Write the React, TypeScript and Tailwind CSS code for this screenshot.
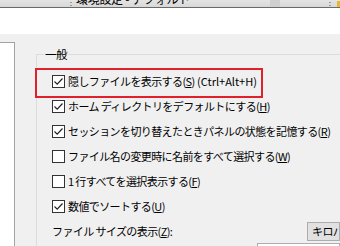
import React from 'react';

type Row = { checked?: boolean; text: string; key: string; tail?: string };

const rows: Row[] = [
  { checked: true, text: '隠しファイルを表示する', key: 'S', tail: ' (Ctrl+Alt+H)' },
  { checked: true, text: 'ホーム ディレクトリをデフォルトにする', key: 'H' },
  { checked: true, text: 'セッションを切り替えたときパネルの状態を記憶する', key: 'R' },
  { checked: false, text: 'ファイル名の変更時に名前をすべて選択する', key: 'W' },
  { checked: false, text: '1 行すべてを選択表示する', key: 'F' },
  { checked: true, text: '数値でソートする', key: 'U' },
];

function CheckBox({ checked }: { checked?: boolean }) {
  return (
    <div className="w-[13px] h-[13px] border border-[#333] bg-white flex items-center justify-center shrink-0">
      {checked && (
        <svg width="11" height="11" viewBox="0 0 11 11">
          <path d="M1.5 5.5 L4.2 8.2 L9.5 2.5" fill="none" stroke="#222" strokeWidth="1.2" />
        </svg>
      )}
    </div>
  );
}

function Label({ text, k, tail }: { text: string; k: string; tail?: string }) {
  return (
    <span className="whitespace-nowrap">
      {text}(<span className="underline underline-offset-1">{k}</span>)
      {tail && <span className="tracking-normal">{tail}</span>}
    </span>
  );
}

export default function App() {
  return (
    <div
      className="w-[340px] h-[246px] overflow-hidden bg-[#f0f0f0] text-black flex flex-col"
      style={{ fontFamily: '"Noto Sans CJK JP", "Noto Sans", sans-serif' }}
    >
      {/* toolbar, cut off at the top */}
      <div className="h-[8px] shrink-0 bg-gradient-to-b from-[#e4e4e4] to-[#d8d8d8] border-b border-[#6a6a6a] relative overflow-hidden">
        <div className="absolute left-[70px] top-[2px] w-[2px] h-[4px] border-y border-[#999]" />
        <div className="absolute left-[76px] top-[-8px] text-[12px] leading-[13px] tracking-[-0.3px] whitespace-nowrap">
          環境設定 - デフォルト
        </div>
        <div className="absolute left-[270px] top-0 w-[10px] h-full bg-[#cfcfcf]" />
        <div className="absolute left-[329px] top-[2px] w-[2px] h-[4px] border-y border-[#999]" />
        <div className="absolute left-[337px] top-[1px] w-[4px] h-[6px] bg-[#e8b830]" />
      </div>

      <div className="h-[26px] shrink-0 bg-white" />

      <div className="flex flex-1 min-h-0">
        <div className="w-[15px] mt-[8px] shrink-0 bg-white border-t border-r border-[#a3a3a3]" />

        <fieldset className="ml-[21px] mt-[13px] flex-1 border-t border-l border-[#dcdcdc] pt-[8px] text-[11px] tracking-[-0.6px] min-w-0">
          <legend className="ml-[7px] px-[1px] text-[11.5px] leading-[14px]">一般</legend>

          <div className="flex flex-col pl-[15px]">
            {rows.map((r, i) => (
              <div key={i} className="h-[25px] flex items-center gap-[3px] relative">
                {i === 0 && (
                  <div className="absolute left-[-17px] top-[-1px] w-[228px] h-[30px] border-2 border-[#e0202a]" />
                )}
                <CheckBox checked={r.checked} />
                <Label text={r.text} k={r.key} tail={r.tail} />
              </div>
            ))}
            <div className="h-[25px] flex items-center justify-between">
              <span className="whitespace-nowrap">
                ファイル サイズの表示(<span className="underline underline-offset-1">Z</span>):
              </span>
              <div className="h-[19px] w-[33px] bg-[#e1e1e1] border border-[#adadad] pl-[4px] flex items-center whitespace-nowrap overflow-hidden">
                キロバイト
              </div>
            </div>
            <div className="ml-[205px] mt-[-1px] h-[10px] bg-white border border-[#abadb3]" />
          </div>
        </fieldset>
      </div>
    </div>
  );
}
